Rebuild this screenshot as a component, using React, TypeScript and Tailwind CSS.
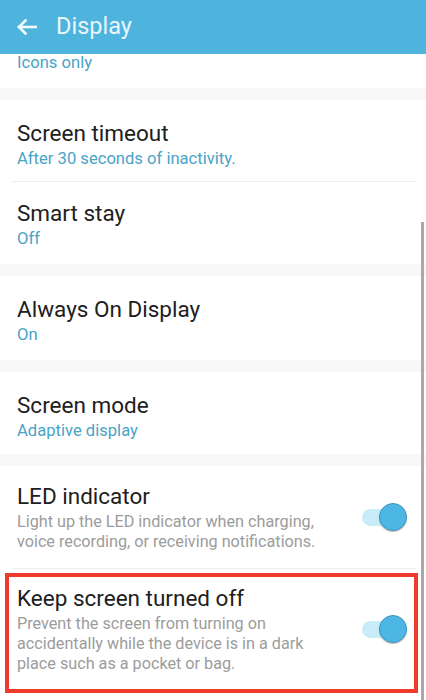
import React from "react";

type Item = {
  title: string;
  value?: string;
  desc?: string;
  toggle?: boolean;
};

function Toggle() {
  return (
    <div className="relative h-[28px] w-[45px] shrink-0">
      <div className="absolute left-0 top-[6px] h-[17px] w-[40px] rounded-full bg-[#c9ecfa]" />
      <div className="absolute right-0 top-0 h-[28px] w-[28px] rounded-full border border-[#3f96bf] bg-[#4cb6e4] shadow-[0_1px_1px_rgba(0,0,0,0.25)]" />
    </div>
  );
}

function Row({ item, className }: { item: Item; className: string }) {
  return (
    <div className={`flex gap-[17px] pl-[17px] pr-[19px] ${className}`}>
      <div className="flex w-[318px] flex-col">
        <div className="text-[22.5px] leading-[28px] text-[#202020]">{item.title}</div>
        {item.value && (
          <div className="mt-[1px] text-[16.6px] leading-[22px] text-[#4aa3c5]">{item.value}</div>
        )}
        {item.desc && (
          <div className="mt-[2px] text-[16.2px] leading-[20px] text-[#9c9c9c]">{item.desc}</div>
        )}
      </div>
      {item.toggle && (
        <div className="ml-auto">
          <Toggle />
        </div>
      )}
    </div>
  );
}

function Band() {
  return <div className="h-[12px] bg-[#f8f8f8]" />;
}

function Divider() {
  return <div className="ml-[12px] mr-[10px] h-px bg-[#ececec]" />;
}

export default function App() {
  return (
    <div
      className="relative h-[700px] w-[426px] overflow-hidden bg-white"
      style={{ fontFamily: "Roboto, 'Noto Sans', sans-serif" }}
    >
      <header className="flex h-[54px] items-center bg-[#4eb3dd] pl-[17px]">
        <svg width="20" height="16" viewBox="0 0 20 16" fill="none" stroke="#f2fbff" strokeWidth="2.6" strokeLinecap="square">
          <path d="M2 8H19" />
          <path d="M8.5 1.5L2 8l6.5 6.5" strokeLinejoin="miter" />
        </svg>
        <span className="ml-[19px] text-[23.5px] leading-none text-[#e8f7fd]">Display</span>
      </header>

      <div className="h-[34px] pl-[17px]">
        <div className="text-[16.6px] leading-[18px] text-[#4aa3c5]">Icons only</div>
      </div>
      <Band />
      <Row className="h-[81px] items-start pt-[19px]" item={{ title: "Screen timeout", value: "After 30 seconds of inactivity." }} />
      <Divider />
      <Row className="h-[82px] items-start pt-[17px]" item={{ title: "Smart stay", value: "Off" }} />
      <Band />
      <Row className="h-[84px] items-start pt-[19px]" item={{ title: "Always On Display", value: "On" }} />
      <Band />
      <Row className="h-[82px] items-start pt-[19px]" item={{ title: "Screen mode", value: "Adaptive display" }} />
      <Band />
      <Row
        className="h-[102px] items-center"
        item={{
          title: "LED indicator",
          desc: "Light up the LED indicator when charging, voice recording, or receiving notifications.",
          toggle: true,
        }}
      />
      <Divider />
      <Row
        className="h-[120px] items-center"
        item={{
          title: "Keep screen turned off",
          desc: "Prevent the screen from turning on accidentally while the device is in a dark place such as a pocket or bag.",
          toggle: true,
        }}
      />

      {/* annotation box */}
      <div className="absolute left-[5px] top-[573px] h-[120px] w-[413px] border-[4px] border-[#f03a2b]" />
      {/* scrollbar */}
      <div className="absolute right-[2px] top-[222px] h-[478px] w-[3px] bg-[#a9a9a9]" />
    </div>
  );
}
